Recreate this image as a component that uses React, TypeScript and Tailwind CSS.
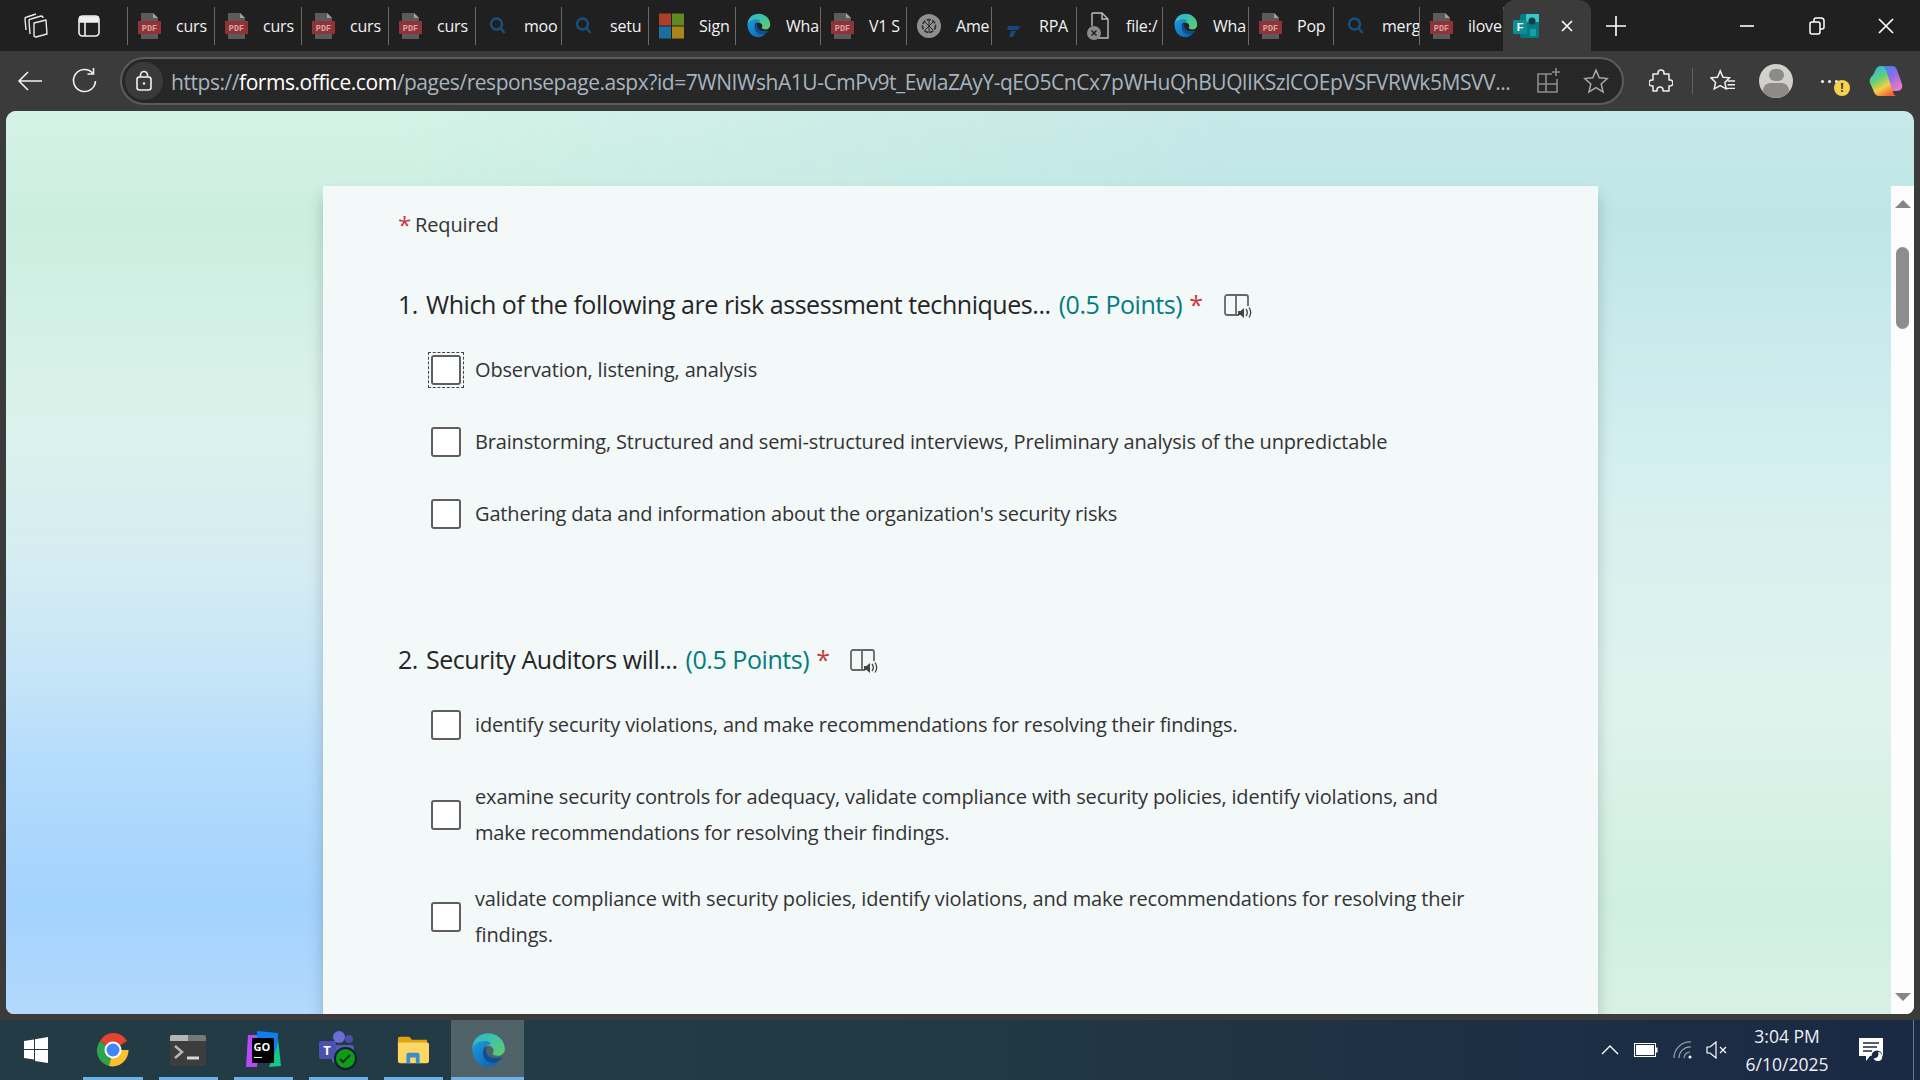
import React from "react";

const PdfIcon = () => (
  <svg width="23" height="28" viewBox="0 0 23 28" className="shrink-0">
    <path d="M3 1h12l5 5v21H3z" fill="#5b5b5b" />
    <path d="M15 1l5 5h-5z" fill="#a0a0a0" />
    <rect x="0" y="9" width="23" height="13" fill="#8f3336" />
    <text x="11.5" y="19" fontSize="8.5" fontWeight="700" textAnchor="middle" fill="#d8a6a6" fontFamily="Liberation Mono, monospace">PDF</text>
  </svg>
);

const SearchIcon = () => (
  <svg width="23" height="26" viewBox="0 0 22 26" fill="none" stroke="#17517f" strokeWidth="2.4" className="shrink-0">
    <circle cx="10" cy="11" r="5.5" />
    <path d="M14 15l4 5" />
  </svg>
);

const MsIcon = () => (
  <svg width="25" height="26" viewBox="0 0 26 26" className="shrink-0">
    <rect width="12.5" height="12.5" fill="#a8402a" />
    <rect x="13.5" width="12.5" height="12.5" fill="#5f8a1e" />
    <rect y="13.5" width="12.5" height="12.5" fill="#1a6f9e" />
    <rect x="13.5" y="13.5" width="12.5" height="12.5" fill="#a8861a" />
  </svg>
);

const EdgeIcon = ({ size = 25 }: { size?: number }) => (
  <svg width={size} height={size} viewBox="0 0 32 32" className="shrink-0">
    <defs>
      <linearGradient id="edgeTop" x1="0" y1="0" x2="1" y2="1">
        <stop offset="0" stopColor="#27b5d8" />
        <stop offset="1" stopColor="#5fd068" />
      </linearGradient>
      <linearGradient id="edgeLow" x1="0" y1="0" x2="1" y2="1">
        <stop offset="0" stopColor="#1b9de2" />
        <stop offset="1" stopColor="#0f5ba8" />
      </linearGradient>
    </defs>
    <path d="M2 15C2 6 9 1 16 1c8 0 15 6 15 14 0 4-3 6-6 6-3 0-5-1-5-2 2-2 1-7-5-7-7 0-13 2-13 3z" fill="url(#edgeTop)" />
    <path d="M2 15c0-4 6-7 11-7 4 0 6 2 5 3-6 0-8 5-6 10 1 3 5 6 9 6 2 0 4 0 5-1-3 3-6 5-10 5C8 31 2 24 2 15z" fill="url(#edgeLow)" />
    <path d="M12 21c1 5 6 7 11 6 3-1 5-3 6-5-2 1-3 1-6 1-4 0-7-1-8-4-1-2-1-4 0-6-3 1-4 5-3 8z" fill="#0d4f97" />
  </svg>
);

const GptIcon = () => (
  <svg width="24" height="24" viewBox="0 0 24 24" fill="none" className="shrink-0">
    <circle cx="12" cy="12" r="12" fill="#8f8f8f" />
    <circle cx="12" cy="12" r="6.5" stroke="#2b2b2b" strokeWidth="1.6" strokeDasharray="4 1.5" />
    <path d="M8 8l8 8M16 8l-8 8M12 5v14" stroke="#2b2b2b" strokeWidth="1" />
  </svg>
);

const RpaIcon = () => (
  <svg width="22" height="26" viewBox="0 0 22 26" className="shrink-0">
    <path d="M6 13h12l-2 4H5z" fill="#174a78" />
    <path d="M9 18h5l-3 6H7z" fill="#174a78" />
  </svg>
);

const FileIcon = () => (
  <svg width="24" height="30" viewBox="0 0 24 30" fill="none" className="shrink-0">
    <path d="M5 2h10l6 6v19H11" stroke="#bdbdbd" strokeWidth="1.4" />
    <path d="M15 2v6h6M5 2v13" stroke="#bdbdbd" strokeWidth="1.4" />
    <circle cx="7" cy="22" r="7" fill="#8a8a8a" />
    <path d="M4.5 19.5l5 5M9.5 19.5l-5 5" stroke="#222" strokeWidth="1.5" />
  </svg>
);

const FormsIcon = () => (
  <svg width="26" height="26" viewBox="0 0 26 26" className="shrink-0">
    <rect x="7" y="1" width="19" height="24" rx="2" fill="#037c80" />
    <rect x="13" y="1" width="13" height="8" fill="#37c6d0" />
    <circle cx="19" cy="8" r="3.5" fill="#1a3c40" />
    <rect x="17" y="16" width="6" height="7" fill="#14a0a8" />
    <rect x="0" y="7" width="14" height="14" rx="1.5" fill="#0b8f94" />
    <text x="7" y="18" fontSize="11" fontWeight="700" fill="#fff" textAnchor="middle" fontFamily="Liberation Sans, sans-serif">F</text>
  </svg>
);

type TabInfo = { label: string; icon: React.ReactNode; w: string };

const tabs: TabInfo[] = [
  { label: "curs", icon: <PdfIcon />, w: "w-[87px]" },
  { label: "curs", icon: <PdfIcon />, w: "w-[87px]" },
  { label: "curs", icon: <PdfIcon />, w: "w-[87px]" },
  { label: "curs", icon: <PdfIcon />, w: "w-[87px]" },
  { label: "moo", icon: <SearchIcon />, w: "w-[86px]" },
  { label: "setu", icon: <SearchIcon />, w: "w-[87px]" },
  { label: "Sign", icon: <MsIcon />, w: "w-[87px]" },
  { label: "Wha", icon: <EdgeIcon />, w: "w-[85px]" },
  { label: "V1 S", icon: <PdfIcon />, w: "w-[86px]" },
  { label: "Ame", icon: <GptIcon />, w: "w-[85px]" },
  { label: "RPA", icon: <RpaIcon />, w: "w-[85px]" },
  { label: "file:/", icon: <FileIcon />, w: "w-[86px]" },
  { label: "Wha", icon: <EdgeIcon />, w: "w-[86px]" },
  { label: "Pop", icon: <PdfIcon />, w: "w-[85px]" },
  { label: "merg", icon: <SearchIcon />, w: "w-[86px]" },
  { label: "ilove", icon: <PdfIcon />, w: "w-[84px]" },
];

const Tab = ({ tab }: { tab: TabInfo }) => (
  <div className={`${tab.w} h-[38px] flex items-center gap-[15px] pl-[10px] border-r border-[#6a6a6a] overflow-hidden shrink-0`}>
    {tab.icon}
    <span className="text-[16px] tracking-[-0.2px] text-[#f2f2f2] whitespace-nowrap">{tab.label}</span>
  </div>
);

const TabBar = () => (
  <div className="h-[51px] bg-[#202020] flex items-center shrink-0">
    <div className="w-[127px] h-full flex items-center shrink-0">
      <div className="w-[72px] flex justify-center">
        <svg width="26" height="26" viewBox="0 0 26 26" fill="none" stroke="#e8e8e8" strokeWidth="1.4" strokeLinejoin="round">
          <path d="M11 10l12-3 1 14-11 3c-1 0-2 0-2-2z" />
          <path d="M7 21L6 8c0-1 1-2 2-2l10-3c1 0 2 0 2 2" />
          <path d="M3 17L2 6c0-1 1-2 2-2l9-3" />
        </svg>
      </div>
      <svg width="22" height="22" viewBox="0 0 22 22" fill="none" stroke="#f0f0f0" strokeWidth="1.6" className="ml-[6px]">
        <rect x="1" y="1" width="20" height="20" rx="3.5" />
        <path d="M2 2h18v5H2z" fill="#f0f0f0" />
        <path d="M7 7v14" />
      </svg>
    </div>
    <div className="flex items-center border-l border-[#6a6a6a]">
      {tabs.map((t, i) => (
        <Tab key={i} tab={t} />
      ))}
    </div>
    <div className="w-[88px] h-[51px] self-end bg-[#3b3b3b] rounded-t-[12px] flex items-center pl-[10px] gap-[21px] shrink-0 ml-[-1px]">
      <FormsIcon />
      <svg width="14" height="14" viewBox="0 0 14 14" stroke="#fff" strokeWidth="1.6">
        <path d="M2 2l10 10M12 2L2 12" />
      </svg>
    </div>
    <svg width="22" height="22" viewBox="0 0 22 22" stroke="#fff" strokeWidth="1.6" className="ml-[14px]">
      <path d="M11 1v20M1 11h20" />
    </svg>
    <div className="ml-auto flex items-center">
      <div className="w-[70px] flex justify-center">
        <svg width="14" height="14" viewBox="0 0 14 14" stroke="#fff" strokeWidth="1.6"><path d="M0 7h14" /></svg>
      </div>
      <div className="w-[70px] flex justify-center">
        <svg width="16" height="18" viewBox="0 0 16 18" fill="none" stroke="#fff" strokeWidth="1.5">
          <rect x="1" y="5" width="10" height="12" rx="2" />
          <path d="M5 5V3c0-1 1-2 2-2h5c2 0 3 1 3 3v6c0 1-1 2-2 2h-2" />
        </svg>
      </div>
      <div className="w-[68px] flex justify-center">
        <svg width="16" height="16" viewBox="0 0 16 16" stroke="#fff" strokeWidth="1.7"><path d="M1 1l14 14M15 1L1 15" /></svg>
      </div>
    </div>
  </div>
);

const AddressBar = () => (
  <div className="h-[60px] bg-[#3b3b3b] flex items-center shrink-0">
    <div className="w-[60px] flex justify-center">
      <svg width="26" height="22" viewBox="0 0 26 22" fill="none" stroke="#f2f2f2" strokeWidth="1.6">
        <path d="M25 11H2M11 2l-9 9 9 9" />
      </svg>
    </div>
    <div className="w-[48px] flex justify-center">
      <svg width="26" height="26" viewBox="0 0 26 26" fill="none" stroke="#f2f2f2" strokeWidth="1.6">
        <path d="M22 5.500A11 11 0 1 0 24.500 13" />
        <path d="M22.500 0v6h-6" />
      </svg>
    </div>
    <div className="ml-[12px] w-[1504px] h-[48px] rounded-full border-2 border-[#5c5c5c] bg-[#272727] flex items-center pl-[3px] shrink-0">
      <div className="w-[38px] h-[38px] rounded-full bg-[#3a3a3a] flex items-center justify-center shrink-0">
        <svg width="18" height="22" viewBox="0 0 18 22" fill="none" stroke="#f2f2f2" strokeWidth="1.6">
          <rect x="2" y="7" width="14" height="13" rx="2.5" />
          <path d="M5.500 7V5a3.500 3.500 0 0 1 7 0v2" />
          <circle cx="9" cy="13.500" r="1.200" fill="#f2f2f2" stroke="none" />
        </svg>
      </div>
      <div className="ml-[8px] mt-[3px] w-[1340px] text-[21px] tracking-[-0.45px] text-[#a6b4bf] whitespace-nowrap overflow-hidden shrink-0">
        https://<span className="text-white">forms.office.com</span>/pages/responsepage.aspx?id=7WNIWshA1U-CmPv9t_EwlaZAyY-qEO5CnCx7pWHuQhBUQlIKSzlCOEpVSFVRWk5MSVV...
      </div>
      <div className="ml-[25px] flex items-center gap-[23px]">
        <svg width="24" height="26" viewBox="0 0 24 26" fill="none" stroke="#8d8d8d" strokeWidth="1.600">
          <path d="M16 6H2v18h19V11" />
          <path d="M10 6v18M2 16h19" />
          <path d="M20 0v8M16 4h8" />
        </svg>
        <svg width="26" height="26" viewBox="0 0 24 24" fill="none" stroke="#a8a8a8" strokeWidth="1.400">
          <path d="M12 2l3 7 7.500.7-5.700 5 1.700 7.300L12 18.200 5.500 22l1.700-7.300-5.700-5L9 9z" />
        </svg>
      </div>
    </div>
    <div className="flex items-center ml-[15px]">
      <div className="w-[44px] flex justify-center">
        <svg width="24" height="26" viewBox="0 0 24 26" fill="none" stroke="#f0f0f0" strokeWidth="1.500" strokeLinejoin="round">
          <path d="M9 5a3 3 0 0 1 6 0v1h5v6h1a3 3 0 0 1 0 6h-1v5h-6v-1a3 3 0 0 0-6 0v1H4v-5H3a3 3 0 0 1 0-6h1V6h5z" />
        </svg>
      </div>
      <div className="w-px h-[26px] bg-[#626262] ml-[9px]" />
      <div className="w-[60px] flex justify-center">
        <svg width="26" height="24" viewBox="0 0 28 26" fill="none" stroke="#f0f0f0" strokeWidth="1.600">
          <path d="M11 2l3 7 7 .6-5 5 1.500 7L11 18l-6.500 3.600L6 14.600l-5-5L8 9z" />
          <path d="M19 13h8M19 17h8M17 21h10" />
        </svg>
      </div>
      <div className="w-[34px] h-[34px] rounded-full bg-[#d0d0cc] overflow-hidden ml-[6px] flex flex-col items-center">
        <div className="w-[15px] h-[15px] rounded-full bg-[#8e8a86] mt-[5px]" />
        <div className="w-[26px] h-[20px] rounded-full bg-[#8e8a86] mt-[2px]" />
      </div>
      <div className="relative w-[60px] flex justify-center ml-[6px]">
        <div className="flex gap-[4px]">
          <i className="w-[3px] h-[3px] rounded-full bg-white" />
          <i className="w-[3px] h-[3px] rounded-full bg-white" />
          <i className="w-[3px] h-[3px] rounded-full bg-white" />
        </div>
        <div className="absolute left-[35px] top-0 w-[16px] h-[16px] rounded-full bg-[#f5d34f] text-[#3b3b3b] text-[12px] leading-[16px] font-bold text-center">!</div>
      </div>
      <div className="ml-[10px]">
        <svg width="34" height="32" viewBox="0 0 34 32">
          <defs>
            <linearGradient id="cpA" x1="0" y1="0" x2="0.6" y2="1">
              <stop offset="0" stopColor="#2f8ff0" />
              <stop offset="0.5" stopColor="#8f6be8" />
              <stop offset="1" stopColor="#e878c8" />
            </linearGradient>
            <linearGradient id="cpB" x1="0.2" y1="0" x2="0.7" y2="1">
              <stop offset="0" stopColor="#2fb8e8" />
              <stop offset="0.4" stopColor="#62cf7a" />
              <stop offset="0.7" stopColor="#f5cf42" />
              <stop offset="1" stopColor="#f2603c" />
            </linearGradient>
          </defs>
          <path d="M14 1h9c3 0 4 2 5 4l5 14c1 4-1 7-5 7h-6l-4-12z" fill="url(#cpA)" />
          <path d="M6 6c1-3 3-5 6-5 3 0 4 2 5 4l7 22c1 2 1 3 3 4H10c-3 0-4-2-5-4L1 18c-1-4 1-6 3-8z" fill="url(#cpB)" />
        </svg>
      </div>
    </div>
  </div>
);

const Checkbox = ({ focused }: { focused?: boolean }) => (
  <div className={`w-[36px] h-[36px] flex items-center justify-center shrink-0 ${focused ? "border border-dashed border-[#444]" : ""}`}>
    <div className="w-[30px] h-[30px] rounded-[3px] border-2 border-[#5f5f5f] bg-white" />
  </div>
);

// two-line answers sit a little lower in their row
const Option = ({ text, focused, two }: { text: string; focused?: boolean; two?: boolean }) => (
  <div className={`flex items-center gap-[11px] ml-[30px] ${two ? "pt-[18px] pb-[12px]" : "py-[15px]"}`}>
    <Checkbox focused={focused} />
    <div className="w-[1012px] min-h-[42px] flex items-center text-[20px] tracking-[-0.16px] leading-[36px] text-[#333]">{text}</div>
  </div>
);

const ReadIcon = () => (
  <svg width="28" height="26" viewBox="0 0 28 26" fill="none" className="shrink-0">
    <path d="M15 21H3c-1 0-2-1-2-2V3c0-1 1-2 2-2h19c1 0 2 1 2 2v9M12 1v20" stroke="#666" strokeWidth="1.800" />
    <path d="M14 17h2.500l3.500-3v10l-3.500-3H14z" fill="#444" />
    <path d="M22 15c1.500 2 1.500 5 0 7M25 13.500c2 3 2 7 0 10" stroke="#444" strokeWidth="1.300" />
  </svg>
);

const Question = ({ n, title, children }: { n: number; title: string; children: React.ReactNode }) => (
  <div>
    <div className="flex items-center h-[40px] text-[25px] tracking-[-0.45px] text-[#252525]">
      <span className="w-[28px]">{n}.</span>
      <span>{title}</span>
      <span className="ml-[8px] text-[#037c80]">(0.5 Points)</span>
      <span className="ml-[7px] text-[#c8383c]">*</span>
      <span className="ml-[21px] mt-[4px]"><ReadIcon /></span>
    </div>
    <div className="mt-[9px]">{children}</div>
  </div>
);

const FormPage = () => (
  <div className="flex-1 min-h-0 mx-[6px] rounded-t-[10px] rounded-b-[8px] overflow-hidden relative flex bg-[linear-gradient(180deg,#c6e9e9_0%,#bfe6e6_12%,#d5eff0_40%,#dff3ec_65%,#d0efe2_88%,#d8f1e6_100%)]">
    <div className="absolute inset-0 pointer-events-none [mask-image:linear-gradient(90deg,#000_20%,transparent_65%)] bg-[linear-gradient(180deg,#d5f2e6_0%,#cbeee0_12%,#dcf2ec_35%,#d5ecf2_50%,#c6e5f8_62%,#b5dcfc_72%,#a3d2fd_88%,#b3d9fd_100%)]" />
    <div className="relative ml-[317px] mt-[75px] w-[1275px] bg-[#f3f8f9] shadow-[0_10px_14px_rgba(0,0,0,0.2)] px-[75px] pt-[19px] overflow-hidden shrink-0">
      <div className="flex items-center h-[40px] text-[20px] tracking-[-0.16px] text-[#333]">
        <span className="text-[#c8383c] text-[24px] mr-[4px] leading-none">*</span>Required
      </div>
      <div className="mt-[40px]">
        <Question n={1} title="Which of the following are risk assessment techniques...">
          <Option focused text="Observation, listening, analysis" />
          <Option text="Brainstorming, Structured and semi-structured interviews, Preliminary analysis of the unpredictable" />
          <Option text="Gathering data and information about the organization's security risks" />
        </Question>
      </div>
      <div className="mt-[90px]">
        <Question n={2} title="Security Auditors will...">
          <Option text="identify security violations, and make recommendations for resolving their findings." />
          <Option two text="examine security controls for adequacy, validate compliance with security policies, identify violations, and make recommendations for resolving their findings." />
          <Option two text="validate compliance with security policies, identify violations, and make recommendations for resolving their findings." />
        </Question>
      </div>
    </div>
    <div className="relative ml-auto mt-[75px] w-[23px] bg-[#fdfdfd] flex flex-col items-center shrink-0">
      <div className="mt-[14px] w-0 h-0 border-x-[8px] border-x-transparent border-b-[8px] border-b-[#858585]" />
      <div className="mt-[39px] w-[13px] h-[82px] rounded-full bg-[#8d8d8d]" />
      <div className="mt-auto mb-[13px] w-0 h-0 border-x-[8px] border-x-transparent border-t-[8px] border-t-[#858585]" />
    </div>
  </div>
);

const TaskItem = ({ children, w, active }: { children: React.ReactNode; w: string; active?: boolean }) => (
  <div className={`${w} h-full relative flex items-center justify-center shrink-0 ${active ? "bg-[#4e6268]" : ""}`}>
    {children}
    <div className={`absolute bottom-0 h-[3px] bg-[#6cb2e8] ${active ? "left-0 right-0" : "left-[8px] right-[8px]"}`} />
  </div>
);

const TaskBar = () => (
  <div className="h-[60px] shrink-0 flex items-center bg-[linear-gradient(90deg,#223b45_0%,#223a45_45%,#1c2f44_80%,#1a2944_100%)]">
    <div className="w-[75px] flex justify-center pr-[3px]">
      <svg width="24" height="26" viewBox="0 0 24 26" fill="#fff">
        <path d="M0 4l10-1.500V12H0zM11 2.300L24 0v12H11zM0 13h10v9.500L0 21zM11 13h13v13l-13-2z" />
      </svg>
    </div>
    <TaskItem w="w-[76px]">
      <svg width="36" height="40" viewBox="0 0 36 36">
        <path d="M18 18L5 9a15.500 15.500 0 0 1 27 0z" fill="#e5432f" />
        <path d="M18 18L5 9a16 16 0 0 0 9 25z" fill="#2fa24c" />
        <path d="M18 18h15.500A16 16 0 0 1 14 34z" fill="#fbc02d" />
        <circle cx="18" cy="18" r="8.500" fill="#fff" />
        <circle cx="18" cy="18" r="6.500" fill="#4285f4" />
      </svg>
    </TaskItem>
    <TaskItem w="w-[75px]">
      <div className="w-[36px] h-[31px] rounded-[2px] bg-[#3d3d3d] overflow-hidden mr-[2px]">
        <div className="h-[6px] flex">
          <div className="w-[18px] bg-[#b5b5b5]" />
          <div className="flex-1 bg-[#777]" />
        </div>
        <svg width="36" height="25" viewBox="0 0 36 25" fill="none">
          <path d="M5 5l7 6-7 6" stroke="#b5b5b5" strokeWidth="2.500" />
          <path d="M17 17h12" stroke="#d8d8d8" strokeWidth="3" />
        </svg>
      </div>
    </TaskItem>
    <TaskItem w="w-[75px]">
      <div className="relative w-[36px] h-[40px] mr-[2px]">
        <svg width="36" height="40" viewBox="0 0 36 40" className="absolute inset-0">
          <path d="M3 5h12l-3 32H1z" fill="#b74af7" />
          <path d="M12 1l21 2-1 20H12z" fill="#0d7ef0" />
          <path d="M33 8l3 28-12 1 8-20z" fill="#12c98a" />
        </svg>
        <div className="absolute left-[7px] top-[8px] w-[22px] h-[25px] bg-black text-white text-[11px] font-bold leading-[13px] pl-[2px] pt-[2px]">
          GO
          <div className="w-[8px] h-[1px] bg-white mt-[4px]" />
        </div>
      </div>
    </TaskItem>
    <TaskItem w="w-[75px]">
      <div className="relative w-[40px] h-[40px]">
        <div className="absolute left-[14px] top-[1px] w-[12px] h-[12px] rounded-full bg-[#6b6fd4]" />
        <div className="absolute left-[26px] top-[5px] w-[8px] h-[8px] rounded-full bg-[#4a4fa8]" />
        <div className="absolute left-[13px] top-[15px] w-[22px] h-[18px] rounded-[3px] bg-[#565bb5]" />
        <div className="absolute left-0 top-[11px] w-[17px] h-[18px] rounded-[2px] bg-[#4c50b0] text-white text-[13px] font-bold text-center leading-[18px]">T</div>
        <div className="absolute left-[15px] top-[17px] w-[23px] h-[23px] rounded-full border-2 border-[#10202a] bg-[#0f9a1a] flex items-center justify-center">
          <svg width="12" height="10" viewBox="0 0 12 10" fill="none" stroke="#0a3a10" strokeWidth="2"><path d="M1 5l3 3 7-7" /></svg>
        </div>
      </div>
    </TaskItem>
    <TaskItem w="w-[75px]">
      <svg width="32" height="30" viewBox="0 0 34 30" className="mr-[2px]">
        <path d="M1 3c0-1 1-2 2-2h10l3 3h16v22H1z" fill="#dea50f" />
        <path d="M1 7h31c1 0 2 1 2 2v18c0 1-1 2-2 2H3c-1 0-2-1-2-2z" fill="#fdd663" />
        <path d="M10 29v-9c0-1 1-2 2-2h10c1 0 2 1 2 2v9h-4v-6h-6v6z" fill="#3a8ed0" />
      </svg>
    </TaskItem>
    <TaskItem w="w-[73px]" active>
      <EdgeIcon size={36} />
    </TaskItem>
    <div className="ml-auto flex items-center h-full">
      <svg width="18" height="10" viewBox="0 0 18 10" fill="none" stroke="#fff" strokeWidth="1.400"><path d="M1 9l8-8 8 8" /></svg>
      <svg width="24" height="14" viewBox="0 0 24 14" className="ml-[15px]">
        <rect x="0.500" y="0.500" width="21" height="13" fill="none" stroke="#fff" />
        <rect x="2" y="2" width="18" height="10" fill="#fff" />
        <rect x="22" y="4.500" width="1.500" height="5" fill="#fff" />
      </svg>
      <svg width="20" height="18" viewBox="0 0 20 18" fill="none" stroke="#9aa3ae" strokeWidth="1.200" className="ml-[15px]">
        <path d="M1 17A16 16 0 0 1 18 1M6 17A11 11 0 0 1 18 6M11 17a6 6 0 0 1 6-6" />
        <circle cx="17" cy="16" r="1.500" fill="#fff" stroke="none" />
      </svg>
      <svg width="22" height="18" viewBox="0 0 22 18" fill="none" stroke="#fff" strokeWidth="1.200" className="ml-[13px]">
        <path d="M1 6h3l6-5v16l-6-5H1zM14 6l6 6M20 6l-6 6" />
      </svg>
      <div className="w-[112px] ml-[3px] flex flex-col items-center text-[#eef1f4] text-[17.5px] leading-[28px]">
        <span>3:04 PM</span>
        <span>6/10/2025</span>
      </div>
      <div className="ml-[6px] w-[43px] flex justify-center">
        <svg width="26" height="26" viewBox="0 0 26 26">
          <path d="M1 1h24v18H12l-4 5v-5H1z" fill="#fff" />
          <path d="M5 6h16M5 10h14M5 14h9" stroke="#1a2944" strokeWidth="1.400" />
          <circle cx="19" cy="19" r="5.500" fill="#1a2944" />
          <path d="M20 15a4.500 4.500 0 1 1-4.500 6 4 4 0 0 0 4.500-6z" fill="#fff" />
        </svg>
      </div>
      <div className="w-px h-full bg-[#6d7785] ml-[21px] mr-[6px]" />
    </div>
  </div>
);

export default function App() {
  return (
    <div className="w-[1920px] h-[1080px] flex flex-col overflow-hidden bg-[#3b3b3b] font-['Open_Sans',sans-serif]">
      <TabBar />
      <AddressBar />
      <div className="flex-1 min-h-0 flex pb-[6px]">
        <FormPage />
      </div>
      <TaskBar />
    </div>
  );
}
